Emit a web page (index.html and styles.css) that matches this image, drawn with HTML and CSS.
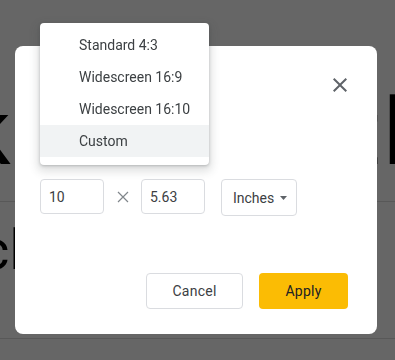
FILE: index.html
```html
<!DOCTYPE html>
<html lang="en">
<head>
    <meta charset="UTF-8">
    <meta name="viewport" content="width=device-width, initial-scale=1.0">
    <title>Page setup</title>
    <link rel="stylesheet" href="styles.css">
</head>
<body>

<div class="page">
    <div class="hero">
        <span class="hero-left">k</span>
        <span class="hero-right">tl</span>
    </div>
    <div class="rule"></div>
    <div class="sub">cl</div>
    <div class="rule rule-low"></div>
</div>

<div class="overlay"></div>

<div class="dialog">
    <div class="dialog-head">
        <button class="close-btn" aria-label="Close">
            <svg width="24" height="24" viewBox="0 0 24 24"><path d="M19 6.41L17.59 5 12 10.59 6.41 5 5 6.41 10.59 12 5 17.59 6.41 19 12 13.41 17.59 19 19 17.59 13.41 12z" fill="#5f6368"/></svg>
        </button>
    </div>

    <div class="size-row">
        <input class="size-input" type="text" value="10">
        <span class="times">
            <svg width="12" height="12" viewBox="0 0 12 12"><path d="M1 1L11 11M11 1L1 11" stroke="#80868b" stroke-width="1.2" fill="none"/></svg>
        </span>
        <input class="size-input" type="text" value="5.63">
        <div class="unit-select">
            <span>Inches</span>
            <svg width="7" height="4" viewBox="0 0 7 4"><path d="M0 0L3.5 4 7 0z" fill="#5f6368"/></svg>
        </div>
    </div>

    <div class="actions">
        <button class="btn btn-cancel">Cancel</button>
        <button class="btn btn-apply">Apply</button>
    </div>

    <div class="menu">
        <div class="menu-item">Standard 4:3</div>
        <div class="menu-item">Widescreen 16:9</div>
        <div class="menu-item">Widescreen 16:10</div>
        <div class="menu-item active">Custom</div>
    </div>
</div>

</body>
</html>
```

FILE: styles.css
```css
body {
    margin: 0;
    padding: 0;
    font-family: Roboto, "Liberation Sans", sans-serif;
    background: #fff;
    overflow: hidden;
}

.page {
    width: 395px;
    height: 360px;
    padding-top: 78px;
    box-sizing: border-box;
}

.hero {
    display: flex;
    justify-content: space-between;
    font-size: 92px;
    line-height: 110px;
    color: #000;
    height: 110px;
}

.hero-left {
    margin-left: -36px;
}

.hero-right {
    margin-right: -12px;
    letter-spacing: 2px;
}

.rule {
    height: 1px;
    background: #ddd;
    margin-top: 13px;
}

.rule-low {
    margin-top: 63px;
}

.sub {
    font-size: 56px;
    line-height: 50px;
    margin-top: 23px;
    margin-left: -20px;
    color: #000;
}

.overlay {
    position: fixed;
    inset: 0;
    background: rgba(0, 0, 0, 0.6);
}

.dialog {
    position: fixed;
    left: 15px;
    top: 46px;
    width: 362px;
    height: 288px;
    box-sizing: border-box;
    background: #fff;
    border-radius: 8px;
    padding: 0 29px 25px 25px;
    display: flex;
    flex-direction: column;
}

.dialog-head {
    display: flex;
    justify-content: flex-end;
    padding-top: 27px;
    margin-right: -4px;
}

.close-btn {
    border: none;
    background: none;
    padding: 0;
    width: 24px;
    height: 24px;
    cursor: pointer;
}

.size-row {
    display: flex;
    align-items: flex-start;
    margin-top: 82px;
}

.size-input {
    width: 64px;
    height: 35px;
    box-sizing: border-box;
    border: 1px solid #dadce0;
    border-radius: 4px;
    padding: 0 8px;
    font-family: Roboto, "Liberation Sans", sans-serif;
    font-size: 14px;
    color: #3c4043;
    outline: none;
}

.times {
    width: 37px;
    height: 35px;
    display: flex;
    align-items: center;
    justify-content: center;
}

.unit-select {
    margin-left: 16px;
    width: 76px;
    height: 37px;
    box-sizing: border-box;
    border: 1px solid #dadce0;
    border-radius: 4px;
    padding: 0 9px 0 11px;
    display: flex;
    align-items: center;
    justify-content: space-between;
    font-size: 14px;
    color: #3c4043;
}

.actions {
    margin-top: auto;
    display: flex;
    justify-content: flex-end;
    gap: 16px;
}

.btn {
    height: 36px;
    border-radius: 4px;
    font-family: Roboto, "Liberation Sans", sans-serif;
    font-size: 14px;
    font-weight: 400;
    letter-spacing: 0.25px;
    cursor: pointer;
}

.btn-cancel {
    width: 97px;
    background: #fff;
    border: 1px solid #dadce0;
    color: #3c4043;
}

.btn-apply {
    width: 89px;
    background: #fbbc04;
    border: none;
    color: #202124;
}

.menu {
    position: absolute;
    left: 25px;
    top: -23px;
    width: 169px;
    padding: 6px 0 8px;
    background: #fff;
    border-radius: 4px;
    box-shadow: 0 1px 3px rgba(60, 64, 67, 0.3), 0 4px 8px 3px rgba(60, 64, 67, 0.15);
}

.menu-item {
    height: 32px;
    line-height: 32px;
    padding-left: 39px;
    font-size: 14px;
    color: #3c4043;
}

.menu-item.active {
    background: #f1f3f4;
}
```
